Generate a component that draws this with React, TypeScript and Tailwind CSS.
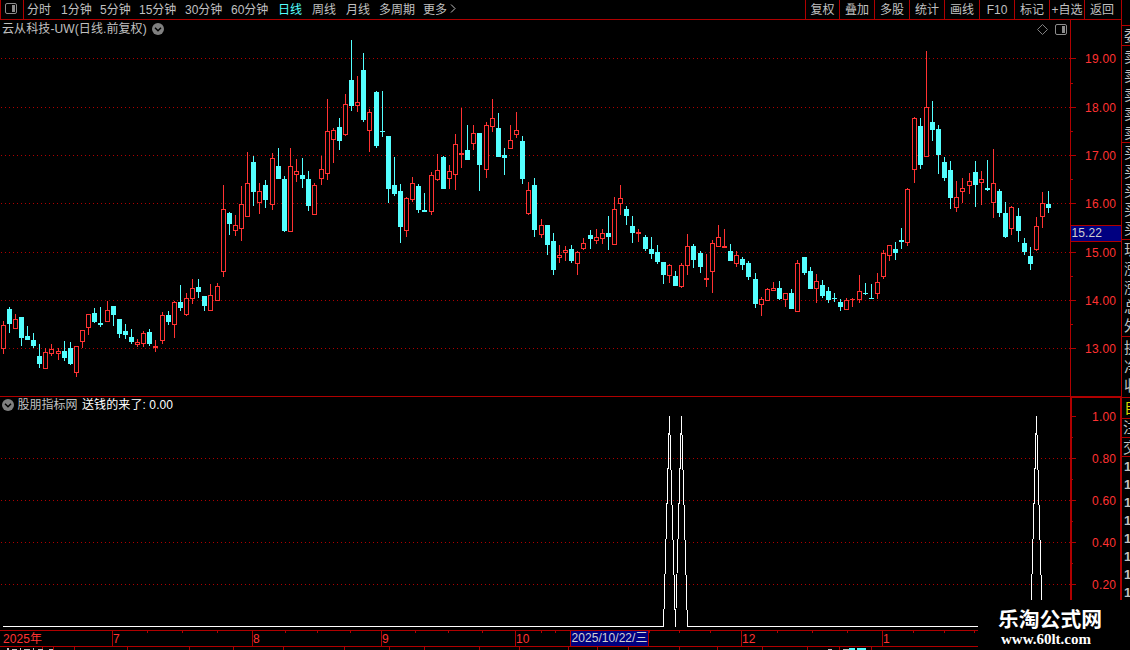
import React from "react";

type Candle = [x: number, high: number, top: number, bottom: number, low: number, up: 0 | 1];

const CANDLES: Candle[] = [
  [3, 321, 325, 349, 354, 1], [9, 307, 309, 324, 333, 0], [15, 314, 319, 329, 329, 1], [21, 317, 317, 338, 346, 0],
  [27, 326, 336, 340, 340, 0], [33, 333, 340, 346, 348, 0], [39, 344, 356, 364, 368, 0], [45, 348, 352, 369, 369, 1],
  [51, 344, 349, 354, 356, 1], [58, 348, 351, 354, 360, 1], [64, 341, 351, 358, 361, 0], [70, 342, 348, 364, 365, 0],
  [76, 346, 346, 373, 377, 1], [82, 330, 330, 342, 348, 1], [88, 314, 314, 328, 335, 1], [94, 308, 313, 322, 323, 0],
  [100, 307, 323, 325, 327, 0], [107, 301, 310, 322, 322, 1], [113, 306, 306, 315, 326, 0], [119, 319, 319, 334, 338, 0],
  [125, 324, 331, 335, 339, 0], [131, 329, 337, 342, 344, 0], [137, 339, 342, 345, 347, 1], [143, 331, 333, 344, 347, 1],
  [149, 329, 332, 344, 346, 0], [155, 340, 346, 348, 352, 1], [162, 312, 315, 341, 344, 1], [168, 311, 315, 322, 325, 0],
  [174, 301, 302, 325, 338, 1], [180, 285, 302, 308, 311, 0], [186, 293, 298, 315, 316, 1], [192, 279, 288, 299, 304, 1],
  [198, 279, 287, 292, 298, 0], [204, 296, 296, 306, 311, 0], [210, 284, 295, 311, 311, 1], [217, 283, 286, 301, 301, 1],
  [223, 185, 209, 272, 277, 1], [229, 212, 213, 224, 235, 0], [235, 215, 225, 231, 236, 1], [241, 186, 204, 229, 241, 1],
  [247, 152, 183, 217, 217, 1], [253, 156, 162, 192, 206, 0], [259, 183, 191, 203, 214, 1], [265, 180, 185, 200, 208, 0],
  [272, 153, 158, 205, 210, 1], [278, 148, 166, 179, 179, 0], [284, 176, 179, 231, 232, 0], [290, 148, 166, 232, 232, 1],
  [296, 159, 171, 175, 182, 1], [302, 158, 175, 179, 188, 0], [308, 171, 179, 206, 211, 0], [314, 183, 185, 215, 215, 1],
  [321, 156, 169, 179, 185, 1], [327, 99, 131, 174, 180, 1], [333, 128, 130, 140, 163, 1], [339, 118, 127, 141, 150, 0],
  [345, 94, 104, 135, 136, 1], [351, 40, 80, 106, 111, 0], [357, 76, 102, 106, 112, 1], [363, 53, 70, 120, 122, 0],
  [369, 109, 112, 131, 152, 1], [376, 91, 92, 146, 148, 0], [382, 91, 131, 132, 137, 0], [388, 136, 136, 189, 203, 0],
  [394, 157, 185, 194, 196, 0], [400, 184, 191, 227, 243, 0], [406, 197, 198, 231, 237, 1], [412, 177, 183, 200, 202, 1],
  [418, 184, 186, 210, 213, 0], [424, 193, 210, 212, 212, 0], [431, 172, 175, 212, 215, 1], [437, 154, 170, 180, 181, 1],
  [443, 156, 157, 189, 189, 0], [449, 165, 171, 179, 189, 1], [455, 134, 144, 175, 190, 1], [461, 108, 153, 155, 168, 1],
  [467, 125, 150, 160, 160, 0], [473, 125, 133, 144, 150, 1], [479, 133, 133, 165, 191, 0], [486, 122, 125, 170, 178, 1],
  [492, 99, 118, 127, 132, 1], [498, 113, 128, 157, 157, 0], [504, 148, 155, 158, 175, 0], [510, 125, 140, 149, 149, 1],
  [516, 112, 130, 135, 138, 1], [522, 136, 141, 179, 184, 0], [528, 182, 190, 214, 215, 1], [534, 178, 185, 230, 237, 0],
  [541, 219, 225, 235, 238, 1], [547, 225, 225, 245, 255, 0], [553, 233, 241, 270, 275, 0], [559, 245, 255, 258, 263, 1],
  [565, 246, 250, 253, 261, 1], [571, 245, 249, 261, 263, 0], [577, 251, 252, 264, 275, 1], [583, 238, 243, 249, 250, 1],
  [590, 230, 235, 239, 249, 0], [596, 229, 237, 241, 244, 1], [602, 229, 233, 239, 244, 1], [608, 216, 233, 237, 250, 0],
  [614, 197, 209, 245, 245, 1], [620, 185, 198, 204, 215, 1], [626, 206, 209, 216, 225, 0], [632, 216, 226, 233, 243, 0],
  [638, 229, 232, 234, 242, 1], [645, 235, 237, 249, 251, 0], [651, 237, 249, 254, 259, 0], [657, 245, 252, 262, 264, 0],
  [663, 262, 262, 275, 284, 0], [669, 264, 265, 276, 283, 1], [675, 271, 276, 286, 286, 0], [681, 263, 265, 287, 288, 1],
  [687, 234, 246, 266, 275, 1], [693, 244, 246, 260, 268, 0], [700, 251, 253, 267, 273, 0], [706, 254, 278, 280, 287, 1],
  [712, 240, 243, 272, 293, 1], [718, 225, 237, 247, 247, 1], [724, 229, 246, 248, 248, 1], [730, 244, 251, 261, 261, 0],
  [736, 251, 255, 264, 267, 1], [742, 257, 259, 265, 270, 0], [748, 261, 263, 277, 280, 0], [755, 273, 279, 304, 308, 0],
  [761, 297, 299, 305, 316, 1], [767, 288, 289, 301, 301, 1], [773, 282, 288, 291, 291, 1], [779, 281, 288, 299, 300, 0],
  [785, 293, 293, 300, 307, 1], [791, 289, 293, 309, 309, 0], [797, 260, 263, 312, 312, 1], [804, 257, 257, 273, 275, 0],
  [810, 267, 271, 289, 289, 0], [816, 274, 281, 289, 303, 1], [822, 280, 285, 296, 298, 0], [828, 287, 291, 300, 303, 0],
  [834, 293, 298, 299, 302, 0], [840, 299, 302, 307, 311, 0], [846, 298, 300, 310, 310, 1], [852, 298, 299, 300, 307, 1],
  [859, 275, 291, 300, 303, 1], [865, 283, 293, 294, 295, 0], [871, 284, 298, 299, 299, 0], [877, 273, 282, 294, 299, 1],
  [883, 250, 253, 277, 279, 1], [889, 245, 245, 256, 261, 1], [895, 242, 249, 253, 260, 0], [901, 228, 240, 242, 249, 0],
  [907, 188, 189, 243, 246, 1], [914, 117, 118, 170, 183, 1], [920, 118, 126, 165, 169, 0], [926, 51, 107, 157, 157, 1],
  [932, 101, 122, 130, 141, 0], [938, 125, 129, 155, 174, 0], [944, 157, 162, 178, 181, 0], [950, 161, 170, 198, 209, 0],
  [956, 181, 197, 208, 212, 1], [962, 178, 188, 192, 203, 1], [969, 173, 181, 186, 194, 1], [975, 161, 172, 185, 207, 0],
  [981, 171, 179, 183, 205, 1], [987, 160, 188, 190, 191, 0], [993, 149, 183, 203, 218, 1], [999, 189, 191, 213, 217, 0],
  [1005, 202, 213, 237, 238, 0], [1011, 206, 207, 229, 235, 1], [1018, 208, 216, 231, 242, 0], [1024, 238, 243, 252, 255, 0],
  [1030, 247, 256, 264, 270, 0], [1036, 217, 226, 250, 251, 1], [1042, 192, 203, 217, 228, 1], [1048, 191, 204, 208, 213, 0],
];

const PERIODS: [string, string][] = [
  ["分时", "w-[34px]"], ["1分钟", "w-[39px]"], ["5分钟", "w-[39px]"], ["15分钟", "w-[46px]"], ["30分钟", "w-[46px]"],
  ["60分钟", "w-[47px]"], ["日线", "w-[34px]"], ["周线", "w-[34px]"], ["月线", "w-[33px]"], ["多周期", "w-[44px]"], ["更多", "w-[26px]"],
];

const TOOLS: [string, string][] = [
  ["复权", "w-[34px]"], ["叠加", "w-[35px]"], ["多股", "w-[35px]"], ["统计", "w-[35px]"], ["画线", "w-[35px]"],
  ["F10", "w-[35px]"], ["标记", "w-[35px]"], ["+自选", "w-[35px]"], ["返回", "w-[37px] pr-[2px]"],
];

const PRICES: [string, number][] = [
  ["19.00", 58], ["18.00", 107], ["17.00", 155], ["16.00", 203], ["15.00", 252], ["14.00", 300], ["13.00", 348],
];
const LEVELS: [string, number][] = [["1.00", 416], ["0.80", 458], ["0.60", 500], ["0.40", 542], ["0.20", 584]];
const MONTHS: [string, number][] = [["7", 112], ["8", 252], ["9", 381], ["10", 515], ["12", 741], ["1", 882]];
const MINOR = [147, 182, 217, 285, 317, 350, 415, 448, 482, 541, 555, 649, 679, 710, 777, 812, 847, 913, 944, 974];

const SIDE: { items: string[]; box: string }[] = [
  { items: ["委"], box: "h-[20px]" },
  { items: ["卖", "卖", "卖", "卖", "卖"], box: "h-[97px] pt-px" },
  { items: ["买", "买", "买", "买", "买"], box: "h-[97px]" },
  { items: ["现", "涨", "涨", "总", "外"], box: "h-[97px]" },
  { items: ["换", "净", "收"], box: "h-[61px] pt-px" },
];

function Dots({ y }: { y: number }) {
  return <line x1="1" x2="1070" y1={y + 0.5} y2={y + 0.5} stroke="#b00000" strokeDasharray="1 3" />;
}

function Bar({ c: [x, high, top, bottom, low, up] }: { c: Candle }) {
  const color = up ? "#ff3232" : "#54ffff";
  const hollow = up === 1 && bottom - top > 2;
  return (
    <g fill={color}>
      <rect x={x} y={high} width="1" height={low - high} />
      <rect x={x - 2} y={top} width="5" height={bottom - top} />
      {hollow && <rect x={x - 1} y={top + 1} width="3" height={bottom - top - 2} fill="#000" />}
    </g>
  );
}

function Chevron() {
  return (
    <svg width="12" height="12" viewBox="0 0 12 12" className="shrink-0">
      <circle cx="6" cy="6" r="6" fill="#808080" />
      <path d="M3 4.7 6 7.7 9 4.7" fill="none" stroke="#000" strokeWidth="1.5" />
    </svg>
  );
}

function PanelIcon() {
  return (
    <svg width="12" height="11" viewBox="0 0 12 11" className="block">
      <rect x="0.5" y="0.5" width="11" height="10" rx="1.5" fill="none" stroke="#8c8c8c" />
      <rect x="7" y="2" width="3" height="7" fill="#8c8c8c" />
    </svg>
  );
}

function Header() {
  return (
    <header className="flex h-[20px] shrink-0 border-b border-l border-[#b00000] leading-[19px]">
      <div className="w-[23px] shrink-0 border-r border-[#b00000] pl-[4px] pt-[3px]"><PanelIcon /></div>
      <nav className="flex grow pl-[3px]">
        {PERIODS.map(([t, w]) => (
          <span key={t} className={`${w} h-[19px] shrink-0 pt-px ${t === "日线" ? "text-[#54ffff]" : ""}`}>{t}</span>
        ))}
        <svg width="8" height="19" viewBox="0 0 8 19"><path d="M2 4.5 6 8.5 2 12.5" fill="none" stroke="#c0c0c0" /></svg>
      </nav>
      <div className="flex">
        {TOOLS.map(([t, w]) => (
          <span key={t} className={`${w} flex h-[19px] shrink-0 justify-center whitespace-nowrap border-l border-[#b00000] pt-px`}>{t}</span>
        ))}
      </div>
    </header>
  );
}

function PricePanel() {
  return (
    <section className="relative h-[376px] shrink-0">
      <svg width="1121" height="376" viewBox="0 20 1121 376" shapeRendering="crispEdges" className="block">
        {PRICES.map(([p, y]) => <Dots key={p} y={y} />)}
        {CANDLES.map((c) => <Bar key={c[0]} c={c} />)}
        <rect x="1070" y="20" width="1" height="376" fill="#b00000" />
        {PRICES.map(([p, y]) => (
          <g key={p}>
            <rect x="1071" y={y} width="5" height="1" fill="#b00000" />
            <text x="1085" y={y + 5} fill="#ff3232" fontSize="12" textLength="31">{p}</text>
          </g>
        ))}
        {[83, 131, 179, 276, 324].map((y) => <rect key={y} x="1071" y={y} width="2" height="1" fill="#b00000" />)}
        <rect x="1071" y="225" width="50" height="17" fill="#b00000" />
        <rect x="1071" y="226" width="50" height="15" fill="#000080" />
        <text x="1071.5" y="237" fill="#d0d0d0" fontSize="12" textLength="30.5">15.22</text>
        <path d="M1042.5 24.5l5 5-5 5-5-5z" fill="none" stroke="#808080" shapeRendering="auto" />
      </svg>
      <div className="absolute left-[2px] top-0 flex h-[18px] items-center gap-[5px] whitespace-nowrap">
        <span className="w-[145px] tracking-[0.1px]">云从科技-UW(日线.前复权)</span>
        <Chevron />
      </div>
      <div className="absolute left-[1055px] top-[4px]"><PanelIcon /></div>
    </section>
  );
}

function SignalPanel() {
  return (
    <section className="relative h-[234px] shrink-0">
      <svg width="1122" height="234" viewBox="0 396 1122 234" shapeRendering="crispEdges" className="block">
        <rect x="0" y="396" width="1122" height="1" fill="#b00000" />
        <rect x="1070" y="396" width="52" height="2" fill="#b00000" />
        <rect x="1070" y="396" width="2" height="234" fill="#b00000" />
        <rect x="1120" y="396" width="2" height="234" fill="#b00000" />
        {LEVELS.map(([p, y]) => (
          <g key={p}>
            {y > 416 && <Dots y={y} />}
            <rect x="1071" y={y} width="5" height="1" fill="#b00000" />
            <text x="1092" y={y + 5} fill="#ff3232" fontSize="12" textLength="24">{p}</text>
          </g>
        ))}
        {[437, 479, 521, 563].map((y) => <rect key={y} x="1071" y={y} width="2" height="1" fill="#b00000" />)}
        <path
          d="M3 626.5H663.5L669.5 416.5 675.5 626.5 681.5 416.5 687.5 626.5H1030.5L1036.5 416.5 1042.5 626.5H1048"
          fill="none" stroke="#fff"
        />
      </svg>
      <div className="absolute left-[2px] top-0 flex h-[18px] items-center gap-[3.5px] whitespace-nowrap">
        <Chevron />
        <span className="w-[61px]">股朋指标网</span>
        <span className="tracking-[0.1px] text-white">送钱的来了: 0.00</span>
      </div>
    </section>
  );
}

function TimeAxis() {
  return (
    <svg width="1121" height="20" viewBox="0 630 1121 20" shapeRendering="crispEdges" className="block shrink-0">
      <g fill="#b00000">
        <rect x="0" y="630" width="1121" height="1" />
        <rect x="0" y="646" width="1121" height="1" />
        {MINOR.map((x) => <rect key={x} x={x} y="631" width="1" height="2" />)}
        {MONTHS.map(([m, x]) => <rect key={m} x={x} y="631" width="1" height="15" />)}
        {[42, 53, 74, 127, 189, 233, 283, 344, 389, 424, 479, 519, 568, 597, 628, 679, 717, 762, 807, 839, 871].map((x) => (
          <rect key={x} x={x} y="647" width="1" height="3" />
        ))}
      </g>
      <g fill="#ff3232" fontSize="12">
        <text x="3" y="643" textLength="39">2025年</text>
        {MONTHS.map(([m, x]) => <text key={m} x={x + 1} y="643">{m}</text>)}
      </g>
      <rect x="570" y="631" width="79" height="15" fill="#b00000" />
      <rect x="571" y="631" width="77" height="15" fill="#000080" />
      <text x="571.5" y="642" fill="#d0d0d0" fontSize="12" textLength="76">2025/10/22/三</text>
      <g fill="#c0c0c0">
        <path d="M7 648h2v2h-2zM12 649h5v1h-5zM20 648h1v2h-1zM24 649h6v1h-6zM33 648h1v2h-1zM38 649h5v1h-5zM49 649h4v1h-4zM828 649h4v1h-4zM843 649h6v1h-6z" />
      </g>
      <path d="M849 648h6v2h-6zM857 648h9v2h-9z" fill="#54ffff" />
    </svg>
  );
}

function SidePanel() {
  return (
    <aside className="flex w-[9px] shrink-0 flex-col overflow-hidden border-l border-[#b00000] pt-[25px] text-[15px]">
      {SIDE.map(({ items, box }, i) => (
        <div key={i} className={`${box} shrink-0 border-t border-[#b00000] pl-[2px]`}>
          {items.map((t, k) => <div key={k} className="h-[19px] w-[16px] leading-[19px]">{t}</div>)}
        </div>
      ))}
      <div className="h-[21px] shrink-0 border-t border-[#b00000] pl-[2px] leading-[20px] text-[#d8d800]">自</div>
      <div className="h-[19px] shrink-0 border-t border-[#b00000] pl-px leading-[18px]">注</div>
      <div className="h-[20px] shrink-0 border-y border-[#b00000] pl-px leading-[19px]">交</div>
      {[0, 1, 2, 3, 4, 5, 6, 7].map((k) => (
        <div key={k} className="h-[18px] shrink-0 pl-[2px] text-[13px] font-bold leading-[20px]">1</div>
      ))}
    </aside>
  );
}

export default function App() {
  return (
    <main
      className="relative flex h-[650px] w-[1130px] overflow-hidden bg-black text-[12px] text-[#c0c0c0] [font-family:'Liberation_Sans','Noto_Sans_CJK_SC',sans-serif]"
    >
      <div className="flex w-[1121px] shrink-0 flex-col">
        <Header />
        <PricePanel />
        <SignalPanel />
        <TimeAxis />
      </div>
      <SidePanel />
      <div className="absolute left-[978px] top-[600px] flex h-[50px] w-[152px] flex-col bg-black text-white">
        <div className="mt-[7px] h-[24px] whitespace-nowrap pl-[20px] text-[20.8px] font-bold leading-[25px]">乐淘公式网</div>
        <div className="pl-[23px] text-[15px] font-bold leading-[17px] [font-family:'Liberation_Serif',serif]">www.60lt.com</div>
      </div>
    </main>
  );
}
